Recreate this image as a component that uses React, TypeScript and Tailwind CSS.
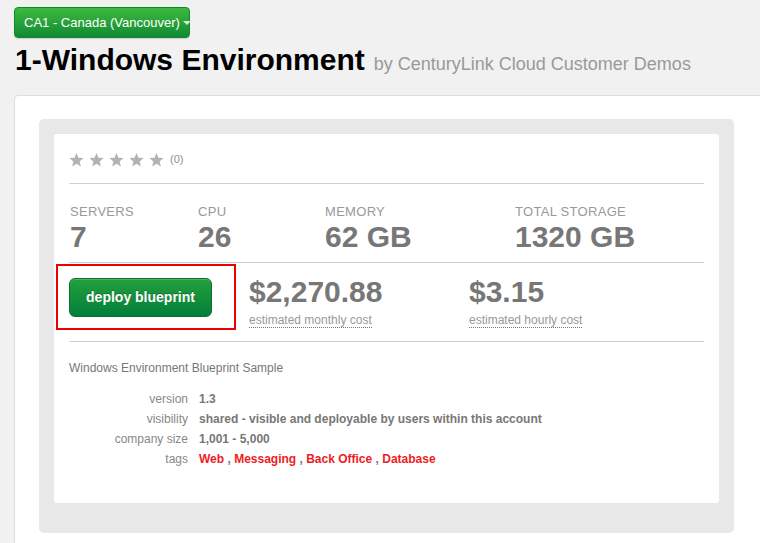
import React from "react";

const Star = () => (
  <svg width="15" height="15" viewBox="0 0 24 24" className="block">
    <path
      d="M12 1.5l3.1 7.6 8.2.6-6.3 5.3 2 8-7-4.4-7 4.4 2-8L.7 9.7l8.2-.6z"
      fill="#b3b3b3"
    />
  </svg>
);

export default function App() {
  const font = { fontFamily: '"Liberation Sans", Arial, Helvetica, sans-serif' };
  return (
    <div
      className="w-[760px] h-[543px] overflow-hidden bg-[#f1f1f1] pl-[14px] pt-[7px]"
      style={font}
    >
      {/* Region dropdown */}
      <div className="flex items-center w-[176px] h-[31px] pl-[9px] whitespace-nowrap rounded-[4px] border border-[#128a2c] bg-gradient-to-b from-[#3cba3f] to-[#0f8a33] text-white text-[13px] leading-[16px] shadow-[0_1px_1px_rgba(0,0,0,0.15)]">
        <span>CA1 - Canada (Vancouver)</span>
        <span className="ml-[3px] mt-[1px] w-0 h-0 border-l-[4px] border-r-[4px] border-t-[4px] border-l-transparent border-r-transparent border-t-[#d8ead8]" />
      </div>

      {/* Title */}
      <div className="mt-[4px] flex items-baseline leading-[36px] whitespace-nowrap">
        <h1 className="text-[30px] font-bold text-black pl-[1px]">1-Windows Environment</h1>
        <span className="ml-[9px] text-[18px] text-[#999999]">by CenturyLink Cloud Customer Demos</span>
      </div>

      {/* Outer white panel */}
      <div className="mt-[13px] w-[800px] h-[480px] bg-white border border-[#dddddd] rounded-[4px] pl-[24px] pt-[23px]">
        <div className="w-[695px] bg-[#e8e8e8] rounded-[5px] p-[15px] pb-[30px]">
          <div className="bg-white rounded-[3px] px-[15px] pt-[15px] pb-[34px]">
            {/* Rating */}
            <div className="flex items-center h-[20px] border-b border-[#d0d0d0] box-content pb-[14px]">
              <div className="flex gap-[5px]">
                <Star />
                <Star />
                <Star />
                <Star />
                <Star />
              </div>
              <span className="ml-[6px] text-[11px] text-[#8592a6]">(0)</span>
            </div>

            {/* Stats */}
            <div className="grid grid-cols-[128px_127px_190px_1fr] pt-[20px] pb-[10px] border-b border-[#d0d0d0] pl-[1px]">
              {[
                ["SERVERS", "7"],
                ["CPU", "26"],
                ["MEMORY", "62 GB"],
                ["TOTAL STORAGE", "1320 GB"],
              ].map(([l, v]) => (
                <div key={l}>
                  <div className="text-[13px] leading-[16px] tracking-[0.3px] text-[#999999]">{l}</div>
                  <div className="mt-[2px] text-[30px] leading-[30px] font-bold text-[#777777]">{v}</div>
                </div>
              ))}
            </div>

            {/* Price row */}
            <div className="flex items-start pt-[1px] pb-[10px] border-b border-[#d0d0d0]">
              <div className="-ml-[13px] w-[180px] h-[66px] border-2 border-[#ee0000] pl-[11px] pt-[12px]">
                <button className="w-[143px] h-[39px] rounded-[6px] border border-[#0b7030] bg-gradient-to-b from-[#22a03c] to-[#007f3a] text-white text-[14px] font-bold shadow-[inset_0_1px_0_rgba(255,255,255,0.2)] [text-shadow:0_-1px_0_rgba(0,0,0,0.25)]">
                  deploy blueprint
                </button>
              </div>
              <div className="ml-[13px] w-[220px] pt-[13px]">
                <div className="text-[30px] leading-[30px] font-bold text-[#777777]">$2,270.88</div>
                <div className="mt-[3px] inline-block text-[12px] leading-[14px] text-[#999999] border-b border-dotted border-[#777777]">
                  estimated monthly cost
                </div>
              </div>
              <div className="pt-[13px]">
                <div className="text-[30px] leading-[30px] font-bold text-[#777777]">$3.15</div>
                <div className="mt-[3px] inline-block text-[12px] leading-[14px] text-[#999999] border-b border-dotted border-[#777777]">
                  estimated hourly cost
                </div>
              </div>
            </div>

            {/* Description */}
            <div className="pt-[18px] text-[12px] leading-[16px] text-[#777777]">
              Windows Environment Blueprint Sample
            </div>

            <div className="mt-[13px] grid grid-cols-[119px_1fr] gap-x-[11px] text-[12px] leading-[20px]">
              <div className="text-right text-[#888888]">version</div>
              <div className="font-bold text-[#777777]">1.3</div>
              <div className="text-right text-[#888888]">visibility</div>
              <div className="font-bold text-[#777777]">shared - visible and deployable by users within this account</div>
              <div className="text-right text-[#888888]">company size</div>
              <div className="font-bold text-[#777777]">1,001 - 5,000</div>
              <div className="text-right text-[#888888]">tags</div>
              <div className="font-bold text-[#777777]">
                <span className="text-[#ee1c24]">Web</span> ,{" "}
                <span className="text-[#ee1c24]">Messaging</span> ,{" "}
                <span className="text-[#ee1c24]">Back Office</span> ,{" "}
                <span className="text-[#ee1c24]">Database</span>
              </div>
            </div>
          </div>
        </div>
      </div>
    </div>
  );
}
